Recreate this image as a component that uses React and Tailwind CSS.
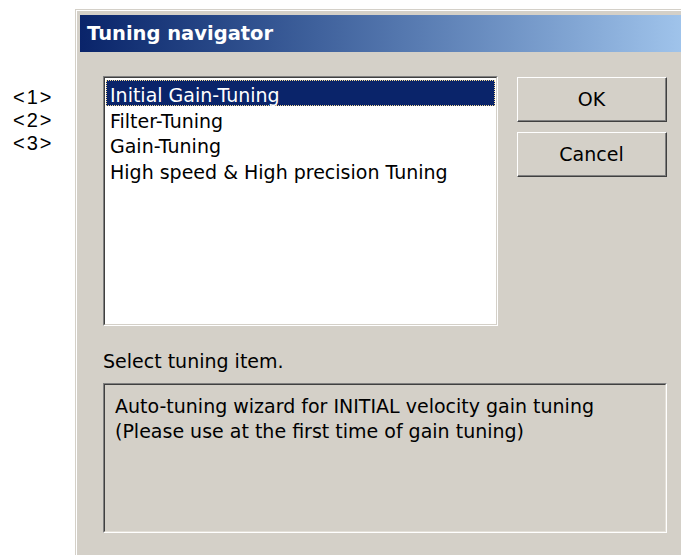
import { useState } from 'react'

const items = [
  'Initial Gain-Tuning',
  'Filter-Tuning',
  'Gain-Tuning',
  'High speed & High precision Tuning',
]

const descriptions = [
  ['Auto-tuning wizard for INITIAL velocity gain tuning', '(Please use at the first time of gain tuning)'],
  ['Auto-tuning wizard for filter tuning', ''],
  ['Auto-tuning wizard for gain tuning', ''],
  ['Auto-tuning wizard for high speed & high precision tuning', ''],
]

const ui = { fontFamily: '"DejaVu Sans", Verdana, sans-serif' }

function Button({ children }) {
  return (
    <button
      className="w-[150px] h-[45px] bg-[#d4d0c8] border-t border-l border-white border-r border-b border-r-[#404040] border-b-[#404040] text-[19px] text-black"
      style={ui}
    >
      <div className="w-full h-full flex items-center justify-center border-r border-b border-[#808080]">
        {children}
      </div>
    </button>
  )
}

export default function App() {
  const [selected, setSelected] = useState(0)

  return (
    <div className="w-[681px] h-[555px] bg-white overflow-hidden flex">
      <div
        className="w-[75px] shrink-0 pl-[13px] pt-[86px] text-[20px] leading-[23px] tracking-[2px] text-black"
        style={{ fontFamily: '"Liberation Sans", Arial, sans-serif' }}
      >
        <div>&lt;1&gt;</div>
        <div>&lt;2&gt;</div>
        <div>&lt;3&gt;</div>
      </div>

      {/* dialog window frame */}
      <div className="w-[630px] h-[570px] mt-[9px] shrink-0 border-t border-l border-[#d4d0c8]">
        <div className="h-full border-t border-l border-white bg-[#d4d0c8] pl-[3px] pt-[4px]">
          <div className="h-[37px] bg-linear-to-r from-[#0a246a] to-[#a6caf0] flex items-center pl-[7px]">
            <span className="text-white font-bold text-[19.5px]" style={ui}>
              Tuning navigator
            </span>
          </div>

          <div className="pl-[23px] pt-[24px] text-[19px] text-black" style={ui}>
            <div className="flex gap-[19px]">
              {/* list box */}
              <div className="w-[395px] h-[250px] border-t border-l border-[#808080] border-r border-b border-r-white border-b-white">
                <div className="h-full bg-white border-t border-l border-[#404040] border-r border-b border-r-[#d4d0c8] border-b-[#d4d0c8] pt-[2px] pl-px pr-px">
                  {items.map((it, i) => (
                    <div
                      key={it}
                      onClick={() => setSelected(i)}
                      className={`h-[25.7px] leading-[28px] pl-[3px] border border-dotted whitespace-nowrap ${
                        selected === i ? 'bg-[#0a246a] text-white border-[#f5db95]' : 'border-transparent'
                      }`}
                    >
                      {it}
                    </div>
                  ))}
                </div>
              </div>

              <div className="flex flex-col gap-[10px] pt-px">
                <Button>OK</Button>
                <Button>Cancel</Button>
              </div>
            </div>

            <div className="mt-[23px] h-[24px] leading-[24px]">Select tuning item.</div>

            {/* description box */}
            <div className="mt-[10px] w-[564px] h-[150px] border-t border-l border-[#808080] border-r border-b border-r-white border-b-white">
              <div className="h-full border-t border-l border-[#404040] border-r border-b border-r-[#e4e0d8] border-b-[#e4e0d8] pl-[10px] pt-[9px] leading-[25px]">
                <div>{descriptions[selected][0]}</div>
                <div>{descriptions[selected][1]}</div>
              </div>
            </div>
          </div>
        </div>
      </div>
    </div>
  )
}
